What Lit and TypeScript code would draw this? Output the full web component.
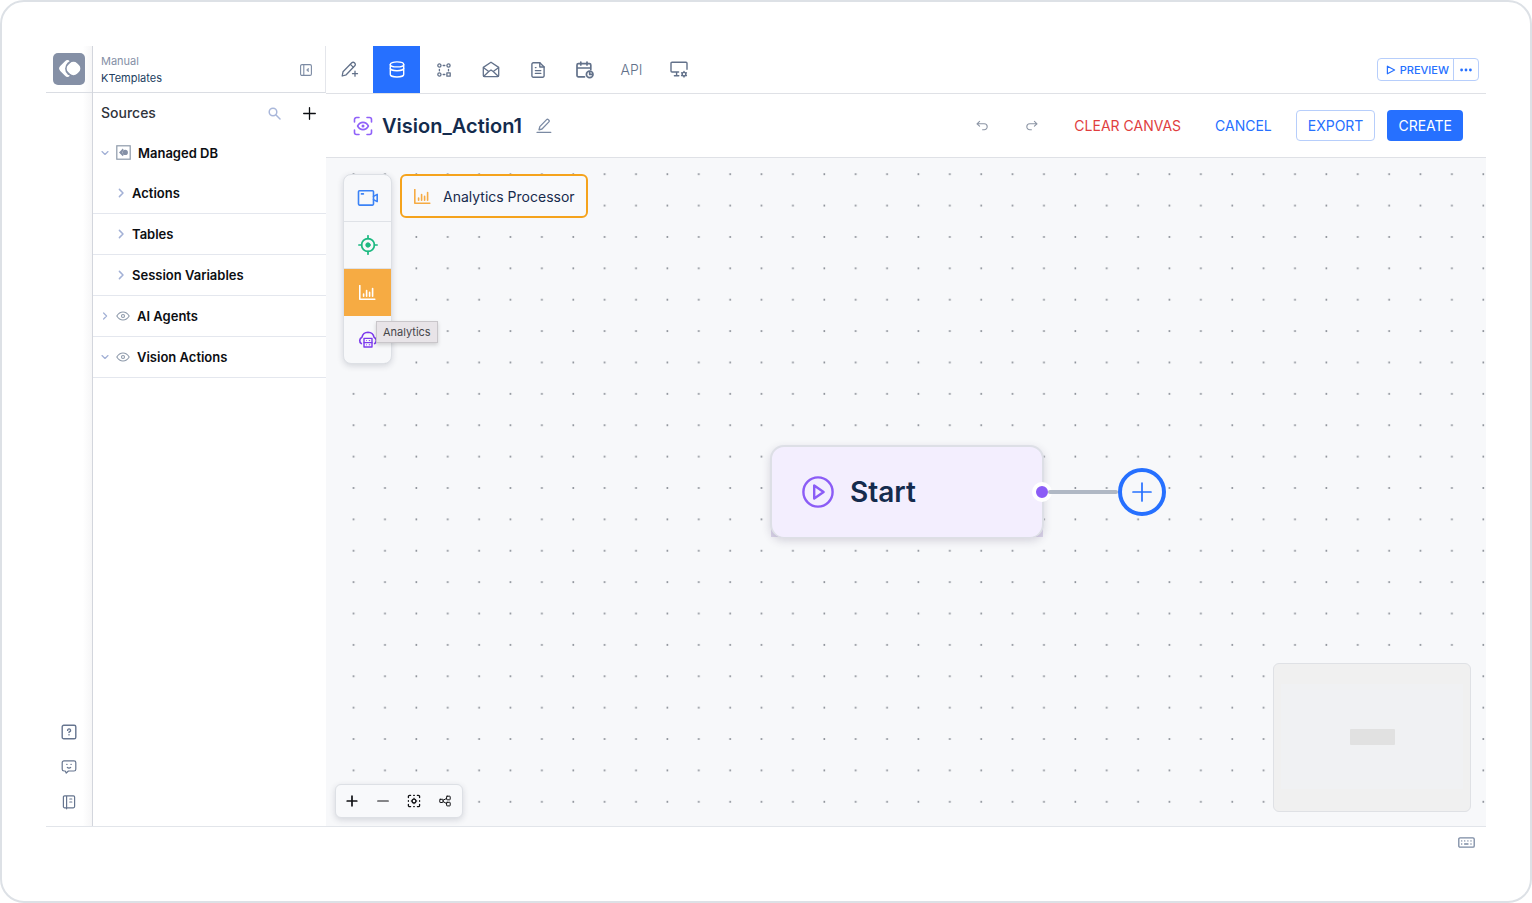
import { LitElement, html, css, svg, nothing } from "lit";
import { customElement, property, state } from "lit/decorators.js";
import { classMap } from "lit/directives/class-map.js";

const glyph = (w: number, h: number, body: unknown, sw = 1.2) => html`<svg
  width=${w} height=${h} viewBox="0 0 ${w} ${h}" fill="none" stroke="currentColor"
  stroke-width=${sw} stroke-linecap="round" stroke-linejoin="round" aria-hidden="true">${body}</svg>`;

const brandMark = svg`
  <rect x="8.500" y="8.700" width="13.600" height="13.600" rx="3.400" transform="rotate(45 15.300 15.500) translate(-.6 .6)" fill="#fff" stroke="none"/>
  <circle cx="20.400" cy="15.500" r="8.300" fill="#8590a6" stroke="none"/>
  <rect x="14.200" y="9.200" width="12.600" height="12.600" rx="5" transform="rotate(45 20.500 15.500)" fill="#fff" stroke="none"/>`;

const chart = svg`<path d="M.8 .6v13.600h15"/><path d="M4.600 11.200V9M7.600 11.200V5.600M10.600 11.200V7.400M13.600 11.200V3.600"/>`;

const icons = {
  brand: html`<svg width="32" height="32" viewBox="0 0 32 32" aria-hidden="true"><rect width="32" height="32" rx="5" fill="#8590a6"/>${brandMark}</svg>`,
  brandSmall: html`<svg width="15" height="15" viewBox="0 0 15 15" aria-hidden="true">
    <rect x=".8" y=".8" width="13.4" height="13.4" fill="#fff" stroke="#8d99aa" stroke-width="1.2"/>
    <path d="M6.8 3.6L3 7.4l3.8 3.8.8-1.2-1.4-2.6 1.4-2.6z" fill="#8590a6"/><circle cx="9.2" cy="7.4" r="2.7" fill="#8590a6"/></svg>`,
  collapse: glyph(12, 12, svg`<rect x=".6" y=".6" width="10.8" height="10.8" rx="1.4"/><path d="M3.8 .8v10.4"/><path d="M8.2 4.4L6.6 6l1.600 1.600z" fill="currentColor" stroke-width=".6"/>`, 1.1),
  search: glyph(13, 13, svg`<circle cx="5" cy="5" r="3.8"/><path d="M8 8l4 4"/>`, 1.5),
  add: glyph(13, 13, svg`<path d="M6.500 .7v11.600M.7 6.500h11.600"/>`, 1.3),
  down: glyph(8, 8, svg`<path d="M1 2.600l3 2.800 3-2.800"/>`, 1.3),
  right: glyph(8, 10, svg`<path d="M2.400 1.400L6 5 2.400 8.600"/>`, 1.5),
  rightSmall: glyph(8, 8, svg`<path d="M2.600 1l3 3-3 3"/>`, 1.2),
  eye: glyph(14, 10, svg`<path d="M.8 5C2.400 2.400 4.600 1 7 1s4.600 1.400 6.200 4C11.600 7.600 9.400 9 7 9S2.400 7.600 .8 5z"/><circle cx="7" cy="5" r="1.500"/>`, 1.1),
  pencilPlus: glyph(18, 17, svg`<path d="M1.200 15l.8-4.200L10.800 1.800a1.800 1.800 0 0 1 2.600 0l.4.4a1.800 1.800 0 0 1 0 2.600L5.200 13.800z"/><path d="M9.400 3.400l3 3"/><path d="M14 10.200v5M11.500 12.700h5"/>`, 1.3),
  database: glyph(16, 17, svg`<ellipse cx="8" cy="3.400" rx="6.700" ry="2.500"/><path d="M1.300 3.400v10c0 1.400 3 2.600 6.700 2.600s6.700-1.200 6.700-2.600v-10"/><path d="M1.300 7.200c0 1.400 3 2.600 6.700 2.600s6.700-1.200 6.700-2.600"/>`, 1.4),
  nodes: glyph(14, 14, svg`<circle cx="2.400" cy="2.500" r="1.600"/><circle cx="11.500" cy="2.500" r="1.600"/><circle cx="2.400" cy="11.500" r="1.600"/><rect x="9.900" y="9.900" width="3.300" height="3.300"/><path d="M6.200 2.500h1.600M6.200 11.500h1.600M2.400 6.300v1.500M11.500 6.300v1.500"/>`, 1.3),
  mail: glyph(18, 17, svg`<path d="M1.300 6.400L9 1.200l7.700 5.200v8.200a1 1 0 0 1-1 1H2.300a1 1 0 0 1-1-1z"/><path d="M1.600 6.800l5.200 3.700L9 9l2.200 1.500 5.200-3.700M1.800 15.200l5-4.600M16.200 15.200l-5-4.600"/>`, 1.3),
  page: glyph(14, 16, svg`<path d="M8.800 .8H2.300A1.400 1.400 0 0 0 .9 2.200v11.600a1.400 1.400 0 0 0 1.400 1.400h9.400a1.400 1.400 0 0 0 1.400-1.400V5z"/><path d="M8.800 .8V5h4.300M4.400 5.600h.6M4.400 8.600h5.400M4.400 11.400h5.400"/>`, 1.4),
  calendar: glyph(18, 18, svg`<path d="M8.500 15.800H2.400A1.400 1.400 0 0 1 1 14.400V4a1.400 1.400 0 0 1 1.400-1.400h11A1.400 1.400 0 0 1 14.800 4v4.400M1 7h13.800M4.800 1v3M11 1v3"/><circle cx="13.700" cy="13.400" r="3.300"/><path d="M13.700 11.600v1.800h1.800"/>`, 1.7),
  monitor: glyph(18, 17, svg`<path d="M8.600 11H2a1 1 0 0 1-1-1V2.200a1 1 0 0 1 1-1h14a1 1 0 0 1 1 1v6M6.600 11v3.600M4.400 14.700h4.400"/><circle cx="14" cy="13.200" r="1.800"/><path d="M14 10.400v.8M14 15.200v.8M11.600 11.800l.7.400M15.700 14.200l.7.400M11.600 14.600l.7-.4M15.700 12.200l.7-.4"/>`, 1.4),
  play: glyph(10, 10, svg`<path d="M1.400 1.200L8.600 5 1.400 8.800z"/>`, 1.2),
  more: glyph(12, 4, svg`<g fill="currentColor" stroke="none"><circle cx="1.600" cy="2" r="1.400"/><circle cx="6" cy="2" r="1.400"/><circle cx="10.400" cy="2" r="1.400"/></g>`),
  scanEye: glyph(20, 20, svg`<path d="M1.500 6V3.500a2 2 0 0 1 2-2H6M14 1.500h2.500a2 2 0 0 1 2 2V6M18.500 14v2.500a2 2 0 0 1-2 2H14M6 18.500H3.500a2 2 0 0 1-2-2V14"/><path d="M4.600 10c1.300-2.400 3.300-3.600 5.400-3.600s4.100 1.200 5.400 3.600c-1.300 2.400-3.300 3.600-5.400 3.600S5.900 12.400 4.600 10z"/><circle cx="10" cy="10" r=".7"/>`, 1.6),
  edit: glyph(16, 16, svg`<path d="M1 14.300h13.800"/><path d="M3 11.800l.8-3.200 6.800-7a1.200 1.200 0 0 1 1.700 0l.6.600a1.200 1.200 0 0 1 0 1.700L6 11z"/>`, 1.3),
  undo: glyph(12, 12, svg`<path d="M3.600 1.400L1 3.800l2.600 2.400M1.200 3.800h7a2.900 2.900 0 0 1 0 6H6.600"/>`, 1.1),
  redo: glyph(12, 12, svg`<path d="M8.400 1.400L11 3.800 8.400 6.200M10.800 3.800h-7a2.900 2.900 0 0 0 0 6h1.600"/>`, 1.1),
  video: glyph(22, 18, svg`<rect x="1.500" y="1.700" width="15" height="14.400" rx="1"/><path d="M4.400 4.900h2"/><path d="M16.500 7.400l3.700-2v7.200l-3.700-2"/>`, 1.6),
  target: glyph(20, 20, svg`<circle cx="10" cy="10" r="6.400"/><circle cx="10" cy="10" r="2.200" fill="currentColor" stroke-width="1"/><path d="M10 .8v2.800M10 16.400v2.800M.8 10h2.800M16.400 10h2.800"/>`, 1.700),
  chart: glyph(17, 15, chart, 1.600),
  cloud: glyph(20, 17, svg`<path d="M3.400 12.600a3.600 3.600 0 0 1 .6-6.400A6.200 6.200 0 0 1 10 1.200a6.200 6.200 0 0 1 6 5 3.600 3.600 0 0 1 .6 6.400" stroke-width="1.600"/><rect x="6" y="7.400" width="8" height="8.600" stroke-width="1.400"/><path d="M6 11.700h8" stroke-width="1.200"/><path d="M8 9.600h.8M8 13.800h.8M10.800 9.600h1.400M10.800 13.800h1.400" stroke-width="1" stroke-linecap="butt"/>`),
  playCircle: glyph(34, 34, svg`<circle cx="17" cy="17" r="14.600"/><path d="M13.200 10.400v13.200L22.600 17z"/>`, 2.400),
  plusThin: glyph(20, 20, svg`<path d="M10 1v18M1 10h18"/>`, 1.700),
  zoomIn: glyph(12, 12, svg`<path d="M6 1.200v9.600M1.200 6h9.600"/>`, 1.700),
  zoomOut: glyph(12, 12, svg`<path d="M.7 6h10.600"/>`, 1.200),
  fit: glyph(14, 14, svg`<path d="M1.400 3.600V2.600a1.200 1.200 0 0 1 1.200-1.200h1M10.400 1.400h1a1.200 1.200 0 0 1 1.200 1.200v1M12.600 10.400v1a1.200 1.200 0 0 1-1.200 1.200h-1M3.600 12.600h-1a1.200 1.200 0 0 1-1.200-1.200v-1M6.700 1.400h.6M6.700 12.600h.6M1.400 6.700v.6M12.600 6.700v.6"/><circle cx="7" cy="7" r="1.900"/><path d="M7 4.200v.6M7 9.200v.6M4.200 7h.6M9.200 7h.6" stroke-width="1"/>`, 1.300),
  arrange: glyph(12, 12, svg`<rect x=".8" y="4.300" width="3.200" height="3.200" rx=".4"/><rect x="7.600" y="1.200" width="3.600" height="3.600" rx=".5"/><rect x="7.600" y="7.300" width="3.600" height="3.600" rx=".5"/><path d="M4.200 5.200l3.400-1.800M4.200 6.600l3.400 2"/>`, 1),
  help: glyph(16, 16, svg`<rect x="1.200" y="1.200" width="13.600" height="13.600" rx="1.600"/><path d="M6.600 6.400a1.500 1.500 0 1 1 2 1.400c-.4.100-.6.400-.6.800M8 10.800v.1"/>`, 1.400),
  chat: glyph(16, 16, svg`<path d="M3 1.800h10a1.800 1.800 0 0 1 1.800 1.800v6.600A1.800 1.800 0 0 1 13 12H7.400l-2.200 2-1-2H3a1.800 1.800 0 0 1-1.800-1.800V3.600A1.800 1.800 0 0 1 3 1.800z"/><path d="M5.800 5.400h.2M10 5.400h.2M6.300 8.400c.8.900 2.600.9 3.400 0"/>`, 1.200),
  book: glyph(14, 16, svg`<path d="M2.600 1.800h8.800a1.200 1.200 0 0 1 1.200 1.200v9.600a1.200 1.200 0 0 1-1.200 1.200H2.600a1.200 1.200 0 0 1-1.200-1.200V3a1.200 1.200 0 0 1 1.200-1.200zM4.600 1.800v13M7.800 5h2M7.800 8h2"/>`, 1.200),
  keyboard: glyph(17, 11, svg`<rect x=".8" y=".8" width="15.400" height="9.400" rx="1.200"/><path d="M3.600 3.900h.2M6.600 3.900h.2M9.800 3.900h.2M12.900 3.900h.2M3.600 7h.2M12.900 7h.2M6.600 7h3.400"/>`, 1.300),
};

const controls = css`
  * { box-sizing: border-box; }
  svg { display: block; flex: none; }
  button {
    display: flex; align-items: center; justify-content: center;
    margin: 0; padding: 0; border: 0; background: none;
    color: inherit; font: inherit; cursor: pointer;
  }
`;

@customElement("side-panel")
class SidePanel extends LitElement {
  static styles = [controls, css`
    :host { display: block; border-left: 1px solid #d3d6dd; color: #0c0e12; }
    .project {
      display: flex; align-items: center; justify-content: space-between; height: 47px;
      padding: 1px 13px 0 8px; border-bottom: 1px solid #dadde3; border-right: 1px solid #e4e6eb;
      font-size: 11px; line-height: 17px; color: #223e61;
    }
    .area { color: #8590a6; }
    .project button { color: #7b8aa3; }
    .heading { display: flex; align-items: center; height: 40px; padding: 0 10px 0 8px; }
    h2 { flex: 1; margin: 0; font-size: 14px; font-weight: 500; line-height: 20px; color: #30343b; }
    .search { margin-right: 22px; color: #a9b7da; }
    .row {
      justify-content: flex-start; gap: 7px; width: 100%; height: 41px;
      padding-left: 8px; border-bottom: 1px solid #e4e7ee; font-size: 13px; font-weight: 600;
    }
    .row.plain { height: 40px; border-bottom-color: transparent; }
    .row.nested { padding-left: 24px; }
    .twist { color: #a3b1d6; }
    .icon { color: #8d99aa; }
  `];

  render() {
    const row = (label: string, cls: string, twist: unknown, icon: unknown = nothing) => html`
      <button class="row ${cls}"><span class="twist">${twist}</span>${icon === nothing ? nothing : html`<span class="icon">${icon}</span>`}<span>${label}</span></button>`;
    return html`
      <div class="project">
        <div><div class="area">Manual</div><div>KTemplates</div></div>
        <button aria-label="Collapse panel">${icons.collapse}</button>
      </div>
      <div class="heading">
        <h2>Sources</h2>
        <button class="search" aria-label="Search">${icons.search}</button>
        <button aria-label="Add source">${icons.add}</button>
      </div>
      ${row("Managed DB", "plain", icons.down, icons.brandSmall)}
      ${row("Actions", "nested", icons.right)}
      ${row("Tables", "nested", icons.right)}
      ${row("Session Variables", "nested", icons.right)}
      ${row("AI Agents", "", icons.rightSmall, icons.eye)}
      ${row("Vision Actions", "", icons.down, icons.eye)}`;
  }
}

@customElement("flow-canvas")
class FlowCanvas extends LitElement {
  @state() private tool = "Analytics";

  static styles = [controls, css`
    :host { display: block; position: relative; overflow: hidden; background: #f7f8fa; }
    .dots { position: absolute; inset: 0; width: 100%; height: 100%; }
    .tools { position: relative; display: flex; align-items: flex-start; gap: 8px; padding: 16px 17px; }
    .palette {
      position: relative; border: 1px solid #dde0e5; border-radius: 8px;
      background: #f7f8fa; box-shadow: 0 2px 6px rgba(30, 40, 60, .16);
    }
    .palette button { width: 47px; height: 47px; border-bottom: 1px solid #dfe2e7; }
    .palette button:last-of-type { border-bottom: 0; }
    .palette .blue { color: #3b82f6; }
    .palette .green { color: #1cb981; }
    .palette .orange { color: #f5a623; }
    .palette .violet { color: #7c3aed; }
    .palette button.active { background: #f6ab43; border-color: #f6ab43; color: #fff; }
    .tip {
      position: absolute; left: 32px; top: 146px; padding: 1px 6px;
      border: 1px solid #c9c6ca; background: #e8e4e8; color: #46464a;
      font-size: 11px; line-height: 18px; box-shadow: 0 2px 4px rgba(0, 0, 0, .16);
    }
    .processor {
      gap: 12px; height: 44px; padding: 0 11px 0 12px; border: 2px solid #f5a31c; border-radius: 6px;
      background: #f8f9fb; color: #172b4d; font-size: 14px; font-weight: 400;
    }
    .processor svg { color: #f6ab43; }
    .base { position: absolute; left: 445px; top: 365px; width: 272px; height: 14px; background: #dbd5ea; }
    .node {
      position: absolute; left: 444px; top: 287px; display: flex; align-items: center; gap: 15px;
      width: 274px; height: 93px; padding-left: 29px; border: 2px solid #dddfe6; border-bottom-width: 1px;
      border-radius: 14px; background: #f3eefe; box-shadow: 0 3px 8px rgba(60, 50, 90, .18);
      color: #142b4d; font-size: 28px; font-weight: 600; line-height: 36px;
    }
    .node svg { color: #8b5cf6; }
    .wire { position: absolute; left: 706px; top: 324px; display: flex; align-items: center; height: 20px; }
    .port { width: 20px; height: 20px; border: 4px solid #fff; border-radius: 50%; background: #8b5cf6; }
    .edge { width: 70px; height: 4px; margin-left: -4px; border-radius: 2px; background: #b0b8c4; }
    .grow { flex: none; width: 48px; height: 48px; border: 4px solid #2670ff; border-radius: 50%; color: #2670ff; background: #f7f8fa; }
    .zoom {
      position: absolute; left: 9px; bottom: 8px; display: flex; height: 34px; padding-right: 2px;
      border: 1px solid #dde0e5; border-radius: 6px; background: #f8f9fb;
      box-shadow: 0 2px 6px rgba(30, 40, 60, .16); color: #101114;
    }
    .zoom button { width: 31px; }
    .minimap {
      position: absolute; right: 15px; bottom: 14px; width: 198px; height: 149px; padding: 20px 7px 22px;
      border: 1px solid #dfe1e5; border-radius: 6px; background: #f0f0f0;
    }
    .view { display: grid; place-items: center; height: 100%; background: #f0f1f3; }
    .mini { width: 45px; height: 16px; border-radius: 1px; background: #e1e1e1; }
  `];

  render() {
    const tools: [string, string, unknown][] = [
      ["Source", "blue", icons.video], ["Detection", "green", icons.target],
      ["Analytics", "orange", icons.chart], ["Output", "violet", icons.cloud],
    ];
    return html`
      <svg class="dots" aria-hidden="true">
        <defs><pattern id="grid" x="11.6" y="0.5" width="31.38" height="31.38" patternUnits="userSpaceOnUse">
          <circle cx="16" cy="15.700" r="1" fill="#858a92"/></pattern></defs>
        <rect width="100%" height="100%" fill="url(#grid)"/>
      </svg>
      <div class="base"></div>
      <div class="node">${icons.playCircle}<span>Start</span></div>
      <div class="wire">
        <span class="port"></span><span class="edge"></span>
        <button class="grow" aria-label="Add step">${icons.plusThin}</button>
      </div>
      <div class="tools">
        <div class="palette">
          ${tools.map(([name, tone, icon]) => html`
            <button class=${classMap({ [tone]: true, active: this.tool === name })}
              aria-label=${name} @click=${() => (this.tool = name)}>${icon}</button>`)}
          <div class="tip" role="tooltip">Analytics</div>
        </div>
        <button class="processor">${icons.chart}<span>Analytics Processor</span></button>
      </div>
      <div class="zoom">
        <button aria-label="Zoom in">${icons.zoomIn}</button>
        <button aria-label="Zoom out">${icons.zoomOut}</button>
        <button aria-label="Fit view">${icons.fit}</button>
        <button aria-label="Arrange">${icons.arrange}</button>
      </div>
      <div class="minimap"><div class="view"><div class="mini"></div></div></div>`;
  }
}

@customElement("app-root")
class AppRoot extends LitElement {
  @property() name = "Vision_Action1";

  static styles = [controls, css`
    :host { display: block; font-family: Inter, "Liberation Sans", sans-serif; background: #fff; }
    .frame {
      display: flex; flex-direction: column; min-height: 100vh; padding: 44px;
      border: 2px solid #dde1e6; border-radius: 24px; background: #fff;
    }
    .workspace {
      flex: 1; display: grid; grid-template-columns: 46px 234px minmax(0, 1fr);
      border-bottom: 1px solid #e2e5ea;
    }
    .rail {
      display: flex; flex-direction: column; color: #66758f;
      background: linear-gradient(to right, #fff 80%, #f6f6f7);
    }
    .home { height: 47px; border-bottom: 1px solid #dadde3; }
    .help { display: flex; flex-direction: column; align-items: center; gap: 19px; margin-top: auto; padding-bottom: 16px; }
    .main { display: flex; flex-direction: column; }
    .tabs { display: flex; align-items: center; height: 48px; padding-right: 7px; border-bottom: 1px solid #dfe1e6; color: #62718a; }
    .tab { width: 47px; height: 47px; }
    .tab.active { background: #2670ff; color: #fff; }
    .api { font-size: 14px; font-weight: 300; }
    .preview {
      display: flex; height: 23px; margin-left: auto; border: 1px solid #b7cefb;
      border-radius: 4px; color: #2670ff; font-size: 11px; font-weight: 500;
    }
    .run { gap: 4px; padding: 0 4px 0 8px; border-right: 1px solid #b7cefb; }
    .menu { width: 24px; }
    .title { display: flex; align-items: center; height: 64px; padding: 0 23px 0 27px; border-bottom: 1px solid #dfe1e6; }
    .title .vision { color: #9061f9; }
    h1 { margin: 0 14px 0 9px; font-size: 20px; font-weight: 600; line-height: 28px; color: #142b4d; }
    .title .edit { color: #7b8aa3; }
    .actions { display: flex; align-items: center; margin-left: auto; color: #2670ff; font-size: 14px; }
    .step { width: 50px; height: 31px; color: #8c95a5; }
    .text { height: 31px; padding: 0 17px; }
    .text.danger { color: #e03e3e; }
    .outline { height: 31px; margin: 0 12px 0 7px; padding: 0 11px; border: 1px solid #b7cefb; border-radius: 4px; }
    .solid { height: 31px; padding: 0 11px; border-radius: 4px; background: #2670ff; color: #fff; }
    flow-canvas { flex: 1; }
    .status { display: flex; align-items: center; justify-content: flex-end; height: 30px; padding-right: 11px; color: #7b8aa3; }
  `];

  render() {
    const tab = (label: string, icon: unknown, active = false) => html`
      <button class=${classMap({ tab: true, active })} aria-label=${label}>${icon}</button>`;
    return html`
      <div class="frame">
        <div class="workspace">
          <div class="rail">
            <button class="home" aria-label="Home">${icons.brand}</button>
            <div class="help">
              <button aria-label="Help">${icons.help}</button>
              <button aria-label="Feedback">${icons.chat}</button>
              <button aria-label="Guide">${icons.book}</button>
            </div>
          </div>
          <side-panel></side-panel>
          <div class="main">
            <nav class="tabs">
              ${tab("Design", icons.pencilPlus)}
              ${tab("Data", icons.database, true)}
              ${tab("Workflows", icons.nodes)}
              ${tab("Email", icons.mail)}
              ${tab("Documents", icons.page)}
              ${tab("Scheduler", icons.calendar)}
              <button class="tab api">API</button>
              ${tab("Settings", icons.monitor)}
              <div class="preview">
                <button class="run">${icons.play}<span>PREVIEW</span></button>
                <button class="menu" aria-label="More options">${icons.more}</button>
              </div>
            </nav>
            <div class="title">
              <span class="vision">${icons.scanEye}</span>
              <h1>${this.name}</h1>
              <button class="edit" aria-label="Rename">${icons.edit}</button>
              <div class="actions">
                <button class="step" aria-label="Undo">${icons.undo}</button>
                <button class="step" aria-label="Redo">${icons.redo}</button>
                <button class="text danger">CLEAR CANVAS</button>
                <button class="text">CANCEL</button>
                <button class="outline">EXPORT</button>
                <button class="solid">CREATE</button>
              </div>
            </div>
            <flow-canvas></flow-canvas>
          </div>
        </div>
        <div class="status"><button aria-label="Keyboard shortcuts">${icons.keyboard}</button></div>
      </div>`;
  }
}
